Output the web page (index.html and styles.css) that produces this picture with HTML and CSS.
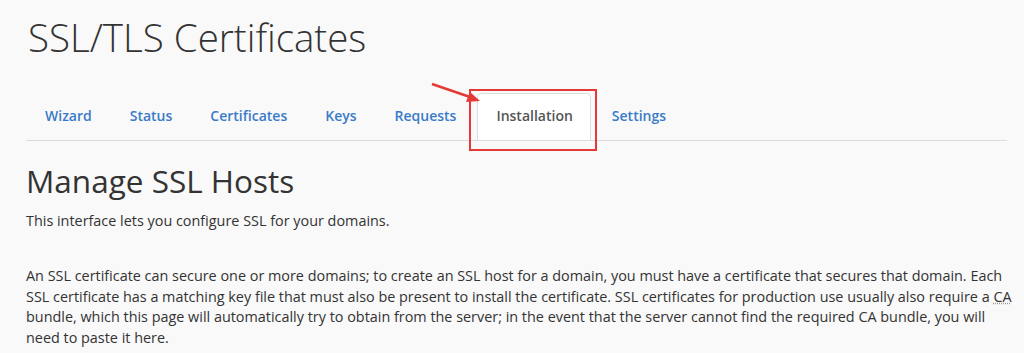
FILE: index.html
```html
<!DOCTYPE html>
<html lang="en">
<head>
    <meta charset="UTF-8">
    <meta name="viewport" content="width=device-width, initial-scale=1.0">
    <title>SSL/TLS Certificates</title>
    <link rel="stylesheet" href="styles.css">
</head>
<body>
    <div class="page">
        <h1 class="page-title">SSL/TLS Certificates</h1>

        <nav class="tabs">
            <a href="#" class="tab">Wizard</a>
            <a href="#" class="tab">Status</a>
            <a href="#" class="tab">Certificates</a>
            <a href="#" class="tab">Keys</a>
            <a href="#" class="tab">Requests</a>
            <a href="#" class="tab active">Installation</a>
            <a href="#" class="tab">Settings</a>

            <!-- annotation: arrow + box around the active tab -->
            <svg class="arrow" width="60" height="30" viewBox="0 0 60 30">
                <line x1="2" y1="3" x2="40" y2="16" />
                <polygon points="50,20 36,21 40,11" />
            </svg>
            <span class="highlight"></span>
        </nav>

        <h2 class="section-title">Manage SSL Hosts</h2>
        <p class="intro">This interface lets you configure SSL for your domains.</p>

        <p class="desc">An SSL certificate can secure one or more domains; to create an SSL host for a domain, you must have a certificate that secures that domain. Each SSL certificate has a matching key file that must also be present to install the certificate. SSL certificates for production use usually also require a <abbr title="Certificate Authority">CA</abbr> bundle, which this page will automatically try to obtain from the server; in the event that the server cannot find the required CA bundle, you will need to paste it here.</p>
    </div>
</body>
</html>
```

FILE: styles.css
```css
body {
    margin: 0;
    background-color: #f9f9f9;
    font-family: 'Open Sans', 'Liberation Sans', sans-serif;
    color: #333;
}

.page {
    padding: 0 9px 0 26px;
}

.page-title {
    font-size: 38.5px;
    font-weight: 300;
    margin: 0;
    padding: 12px 0 0 2px;
    line-height: 50px;
    color: #333;
}

.tabs {
    position: relative;
    display: flex;
    align-items: flex-end;
    margin-top: 32px;
    margin-right: 8px;
    border-bottom: 1px solid #dcdcdc;
    height: 46px;
}

.tab {
    font-size: 14px;
    font-weight: 600;
    color: #3a7bc8;
    text-decoration: none;
    padding: 0 19px 14px;
    line-height: 20px;
}

.tab.active {
    color: #555;
    background-color: #fff;
    border: 1px solid #ddd;
    border-bottom: none;
    border-radius: 5px 5px 0 0;
    padding: 12px 17px 14px 18px;
    margin: 0 2px;
}

.arrow {
    position: absolute;
    left: 404px;
    top: -13px;
}

.arrow line {
    stroke: #e53935;
    stroke-width: 2.5;
}

.arrow polygon {
    fill: #e53935;
}

.highlight {
    position: absolute;
    left: 443px;
    top: -5px;
    width: 124px;
    height: 58px;
    border: 2px solid #e53935;
}

.section-title {
    font-size: 31.5px;
    font-weight: 400;
    margin: 18px 0 0 0;
    line-height: 44px;
    color: #333;
}

.intro {
    font-size: 14.4px;
    margin: 8px 0 0 0;
    line-height: 20px;
}

.desc {
    font-size: 14.4px;
    line-height: 20.5px;
    margin: 35px 0 0 0;
}

abbr {
    text-decoration: underline dotted #999;
}
```
